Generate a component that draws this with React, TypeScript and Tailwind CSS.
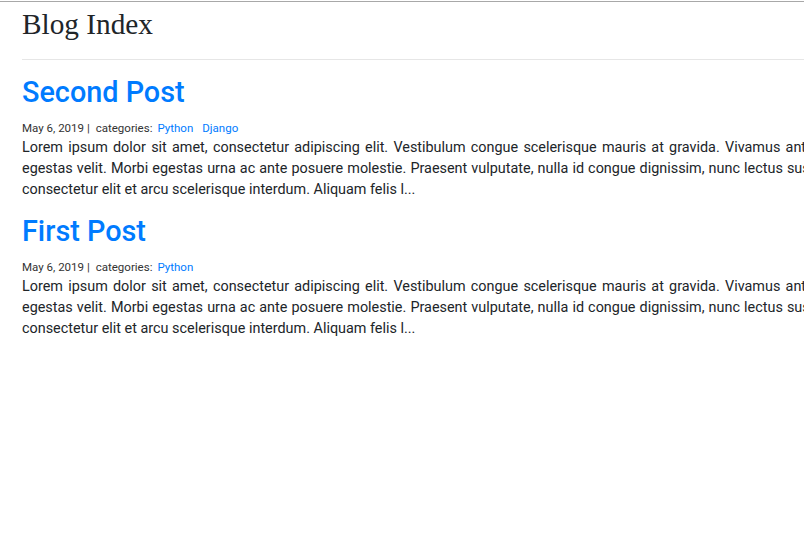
import React from 'react';

const body =
  'Lorem ipsum dolor sit amet, consectetur adipiscing elit. Vestibulum congue scelerisque mauris at gravida. Vivamus ante nisi, blandit sed tincidunt vel, cursus non quam. egestas velit. Morbi egestas urna ac ante posuere molestie. Praesent vulputate, nulla id congue dignissim, nunc lectus suscipit mauris, vitae faucibus nisl est nec dictum dui consectetur elit et arcu scelerisque interdum. Aliquam felis l...';

const posts = [
  { title: 'Second Post', date: 'May 6, 2019', categories: ['Python', 'Django'], body },
  { title: 'First Post', date: 'May 6, 2019', categories: ['Python'], body },
];

const App = () => {
  return (
    <div className="min-h-screen w-full overflow-hidden bg-white border-t border-[#a8a8a8] mt-px">
      <div className="w-[1132px] pl-[22px]">
        <h1 className="font-['Liberation_Serif',serif] text-[29.3px] leading-[44px] text-[#212529] pb-[13px] border-b border-[#e6e6e6]">
          Blog Index
        </h1>
        <div className="font-['Roboto',sans-serif] pt-3">
          {posts.map((post) => (
            <div key={post.title} className="mb-[11px]">
              <h2 className="text-[28.8px] font-medium leading-[40px] text-[#007bff]">
                <a href="#">{post.title}</a>
              </h2>
              <div className="text-[11.52px] leading-[17px] text-[#333] mt-2 flex">
                <span>{post.date} |</span>
                <span className="ml-[6px]">categories:</span>
                {post.categories.map((c, i) => (
                  <a key={c} href="#" className={i === 0 ? 'ml-[5px] text-[#007bff]' : 'ml-[9px] text-[#007bff]'}>
                    {c}
                  </a>
                ))}
              </div>
              <p className="text-[14.4px] leading-[21px] text-[#212529] text-justify">{post.body}</p>
            </div>
          ))}
        </div>
      </div>
    </div>
  );
};

export default App;
